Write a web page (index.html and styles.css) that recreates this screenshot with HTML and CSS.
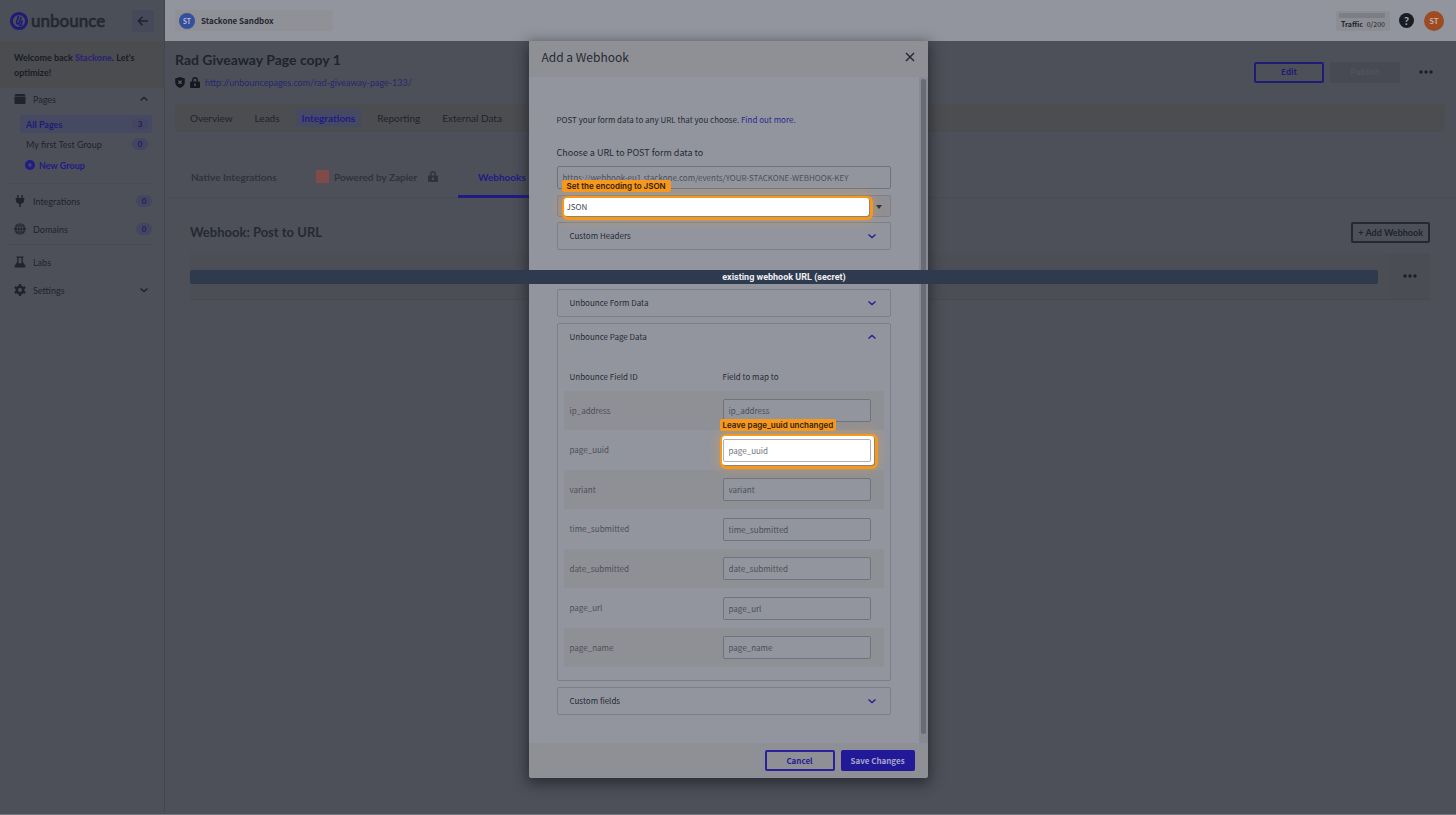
FILE: index.html
```html
<!DOCTYPE html>
<html lang="en">
<head>
<meta charset="utf-8">
<title>Rad Giveaway Page copy 1 - Integrations</title>
<link rel="stylesheet" href="styles.css">
</head>
<body>
<div class="app">
  <aside class="sidebar">
    <div class="brand">
      <svg class="brand-mark" viewBox="0 0 20 20"><circle cx="10" cy="10" r="7.6" fill="none" stroke="currentColor" stroke-width="3"/><path d="M9.400 5.600 7.800 10.600q-.5 2.400 1.200 2.200 1.200-.2 1.600-1.800L12 6.600M10.400 14.400l1.600-.4 1-4" fill="none" stroke="currentColor" stroke-width="1.700" stroke-linecap="round"/></svg>
      <span class="brand-name">unbounce</span>
      <button class="collapse" aria-label="Collapse sidebar"><svg viewBox="0 0 12 12" class="i12"><path d="M11 6H1.500M5.500 1.800 1.300 6l4.200 4.200" fill="none" stroke="currentColor" stroke-width="1.500"/></svg></button>
    </div>
    <p class="welcome">Welcome back <b>Stackone</b>. Let's optimize!</p>
    <nav class="side-nav">
      <button class="nav-row"><svg class="i12" viewBox="0 0 12 12"><path fill="currentColor" d="M1.500 1h9l1 2H.5zM.5 3.600h11V10q0 1-1 1h-9q-1 0-1-1z"/></svg><span>Pages</span><svg class="chev" viewBox="0 0 10 10"><path d="m1.500 6.500 3.500-3 3.500 3" /></svg></button>
      <div class="sub">
        <a href="#" class="sub-row on"><span>All Pages</span><span class="pill">3</span></a>
        <a href="#" class="sub-row"><span>My first Test Group</span><span class="pill">0</span></a>
        <button class="new-group"><svg class="i10" viewBox="0 0 10 10"><circle cx="5" cy="5" r="5" fill="currentColor"/><path d="M5 2.700v4.600M2.700 5h4.600" stroke="#4d5059" stroke-width="1.200"/></svg>New Group</button>
      </div>
      <div class="nav-group">
        <a href="#" class="nav-row"><svg class="i12" viewBox="0 0 12 12"><path fill="currentColor" d="M3.200 0h1.400v3h2.800V0h1.400v3H10.500v1.300H10V6q0 2-3.200 2.800V12H5.200V8.800Q2 8 2 6V4.300h-.5V3h1.700z"/></svg><span>Integrations</span><span class="pill">0</span></a>
        <a href="#" class="nav-row"><svg class="i12" viewBox="0 0 12 12"><circle cx="6" cy="6" r="5.700" fill="currentColor"/><path d="M0 4.200h12M0 7.800h12M6 0v12M4.400.5q-2.300 5.500 0 11M7.600.5q2.300 5.500 0 11" fill="none" stroke="#4d5059" stroke-width=".7"/></svg><span>Domains</span><span class="pill">0</span></a>
      </div>
      <div class="nav-group">
        <a href="#" class="nav-row"><svg class="i12" viewBox="0 0 12 12"><path fill="currentColor" d="M2.500.5h7v1.300h-.8v4L11.500 10q.5 1.600-1 1.600h-9Q0 11.600.5 10l2.800-4.200v-4h-.8zm2.100 1.300v4.400L4 7.200h4l-.6-1V1.800z"/></svg><span>Labs</span></a>
        <button class="nav-row"><svg class="i12" viewBox="0 0 12 12"><circle cx="6" cy="6" r="3.200" fill="none" stroke="currentColor" stroke-width="2.600"/><path d="M6 0v2M6 10v2M.8 3l1.700 1M9.500 8l1.700 1M.8 9l1.700-1M9.500 4l1.700-1" stroke="currentColor" stroke-width="2.400"/></svg><span>Settings</span><svg class="chev" viewBox="0 0 10 10"><path d="m1.500 3.500 3.500 3 3.500-3"/></svg></button>
      </div>
    </nav>
  </aside>

  <div class="main">
    <header class="topbar">
      <button class="account"><span class="avatar blue">ST</span>Stackone Sandbox</button>
      <div class="usage"><div class="meter"></div><div class="usage-text"><b>Traffic</b><span>0/200</span></div></div>
      <button class="help" aria-label="Help">?</button>
      <button class="avatar orange">ST</button>
    </header>

    <main class="content">
      <div class="page-head">
        <div>
          <h1>Rad Giveaway Page copy 1</h1>
          <div class="url-row">
            <svg class="i10" viewBox="0 0 10 11"><path fill="currentColor" d="M5 0 9.800 1.500V5.500Q9.500 9 5 11 .5 9 .2 5.500V1.500z"/><path d="m3.400 3.600 3.200 3.200m0-3.200L3.400 6.800" stroke="#5b5e66" stroke-width="1.300"/></svg>
            <svg class="i10 lock" viewBox="0 0 10 11"><path fill="none" stroke="currentColor" stroke-width="1.400" d="M2.800 5V3a2.200 2.200 0 0 1 4.400 0v2"/><rect y="4.600" width="10" height="6.400" rx="1" fill="currentColor"/><path d="M5 6.500v2.500" stroke="#5b5e66" stroke-width="1.300"/></svg>
            <a href="#">http://unbouncepages.com/rad-giveaway-page-133/</a>
          </div>
        </div>
        <div class="head-actions">
          <button class="btn edit">Edit</button>
          <button class="btn publish" disabled>Publish</button>
          <button class="dots" aria-label="More actions"><svg viewBox="0 0 14 4"><circle cx="2" cy="2" r="1.700"/><circle cx="7" cy="2" r="1.700"/><circle cx="12" cy="2" r="1.700"/></svg></button>
        </div>
      </div>
      <nav class="tabs">
        <a href="#">Overview</a><a href="#">Leads</a><a href="#" class="on">Integrations</a><a href="#">Reporting</a><a href="#">External Data</a>
      </nav>
    </main>
    <nav class="subtabs">
      <a href="#" class="native">Native Integrations</a>
      <a href="#" class="zapier"><span class="zap"></span>Powered by Zapier<svg class="i10 lock" viewBox="0 0 10 11"><path fill="none" stroke="currentColor" stroke-width="1.400" d="M2.800 5V3a2.200 2.200 0 0 1 4.400 0v2"/><rect y="4.600" width="10" height="6.400" rx="1" fill="currentColor"/><path d="M5 6.500v2.500" stroke="#5b5e66" stroke-width="1.300"/></svg></a>
      <a href="#" class="hooks">Webhooks</a>
    </nav>
    <section class="hook-section">
      <div class="hook-head"><h2>Webhook: Post to URL</h2><button class="add">+ Add Webhook</button></div>
      <div class="hook-card">
        <div class="hook-url"><div class="secret">existing webhook URL (secret)</div></div>
        <button class="dots" aria-label="Webhook actions"><svg viewBox="0 0 14 4"><circle cx="2" cy="2" r="1.700"/><circle cx="7" cy="2" r="1.700"/><circle cx="12" cy="2" r="1.700"/></svg></button>
      </div>
    </section>
  </div>
</div>

<div class="overlay">
  <div class="modal" role="dialog" aria-labelledby="modal-title">
    <div class="modal-head"><h2 id="modal-title">Add a Webhook</h2><button aria-label="Close"><svg viewBox="0 0 10 10"><path d="m1 1 8 8m0-8L1 9" stroke="currentColor" stroke-width="1.500"/></svg></button></div>
    <div class="modal-body">
      <form class="form" id="hook-form">
        <p class="intro">POST your form data to any URL that you choose. <a href="#">Find out more.</a></p>
        <label class="url-label" for="hook-url">Choose a URL to POST form data to</label>
        <input id="hook-url" class="field" type="text" placeholder="https://webhook-eu1.stackone.com/events/YOUR-STACKONE-WEBHOOK-KEY">
        <div class="encoding">
          <div class="callout">Set the encoding to JSON</div>
          <select class="spot" aria-label="Encoding"><option>JSON</option></select>
          <svg class="caret" viewBox="0 0 6 4"><path d="M0 0h6L3 4z"/></svg>
        </div>
        <button type="button" class="panel row headers">Custom Headers<svg class="chev" viewBox="0 0 10 10"><path d="m1.500 3.500 3.500 3 3.500-3"/></svg></button>
        <button type="button" class="panel row">Unbounce Form Data<svg class="chev" viewBox="0 0 10 10"><path d="m1.500 3.500 3.500 3 3.500-3"/></svg></button>
        <div class="panel">
          <button type="button" class="row open">Unbounce Page Data<svg class="chev" viewBox="0 0 10 10"><path d="m1.500 6.500 3.500-3 3.500 3"/></svg></button>
          <table>
            <thead><tr><th>Unbounce Field ID</th><th>Field to map to</th></tr></thead>
            <tbody>
              <tr><td><label for="f1">ip_address</label></td><td><input id="f1" class="field" placeholder="ip_address"></td></tr>
              <tr><td><label for="f2">page_uuid</label></td><td><div class="uuid spot"><div class="callout">Leave page_uuid unchanged</div><input id="f2" class="field" placeholder="page_uuid"></div></td></tr>
              <tr><td><label for="f3">variant</label></td><td><input id="f3" class="field" placeholder="variant"></td></tr>
              <tr><td><label for="f4">time_submitted</label></td><td><input id="f4" class="field" placeholder="time_submitted"></td></tr>
              <tr><td><label for="f5">date_submitted</label></td><td><input id="f5" class="field" placeholder="date_submitted"></td></tr>
              <tr><td><label for="f6">page_url</label></td><td><input id="f6" class="field" placeholder="page_url"></td></tr>
              <tr><td><label for="f7">page_name</label></td><td><input id="f7" class="field" placeholder="page_name"></td></tr>
            </tbody>
          </table>
        </div>
        <button type="button" class="panel row">Custom fields<svg class="chev" viewBox="0 0 10 10"><path d="m1.500 3.500 3.500 3 3.500-3"/></svg></button>
      </form>
      <div class="scroll"><div class="thumb"></div></div>
    </div>
    <div class="modal-foot"><button class="btn cancel">Cancel</button><button class="btn save" form="hook-form">Save Changes</button></div>
  </div>
</div>
</body>
</html>
```
FILE: styles.css
```css
* { box-sizing: border-box; }
html, body { height: 100%; }
body { margin: 0; background: #4d5059; color: #20232c; font: 9px/15px Lato, "Noto Sans", sans-serif; overflow: hidden; }
button, input, select { font: inherit; color: inherit; margin: 0; }
button { border: 0; padding: 0; background: none; display: flex; align-items: center; text-align: left; }
a { color: inherit; text-decoration: none; }
svg { display: block; flex: none; }
h1, h2, p { margin: 0; }
.i12 { width: 12px; height: 12px; }
.i10 { width: 10px; height: 11px; }
.chev { width: 10px; height: 10px; margin-left: auto; fill: none; stroke: currentColor; stroke-width: 1.5; }

.app { display: flex; height: 100%; border-bottom: 1px solid #74777e; }
.sidebar { flex: none; width: 165px; border-right: 1px solid #444750; }
.brand { display: flex; align-items: center; height: 41px; padding: 0 10px 0 9px; background: #4b4f58; }
.brand-mark { width: 20px; height: 20px; color: #211b78; }
.brand-name { margin-left: 2px; font: 500 17px/20px Lato, sans-serif; color: #242730; -webkit-text-stroke: 0.5px currentColor; }
.collapse { justify-content: center; width: 22px; height: 22px; margin-left: auto; border-radius: 3px; background: #454959; }
.welcome { padding: 9px 20px 8px 14px; background: #4b4c50; color: #191c24; font-weight: 700; }
.welcome b { color: #2b2575; }
.nav-row { display: flex; align-items: center; gap: 7px; width: 100%; height: 28px; padding: 0 12px 0 14px; color: #20232c; }
.side-nav > .nav-row { height: 22px; }
.nav-row .chev { margin-right: 3px; }
.pill { margin-left: auto; width: 16px; height: 12px; border-radius: 6px; background: #444561; color: #211d5c; font: 700 8px/12px Lato, sans-serif; text-align: center; }
.sub { padding: 5px 12px 7px 20px; }
.sub-row { display: flex; align-items: center; height: 18px; margin-bottom: 2px; padding: 0 4px 0 6px; border-radius: 2px; }
.sub-row.on { background: #464962; color: #211b78; font-weight: 700; }
.new-group { gap: 4px; height: 20px; padding-left: 5px; color: #211b87; font-weight: 700; }
.new-group .i10 { height: 10px; }
.nav-group { margin-top: 1px; }
.nav-group::before { content: ""; display: block; height: 1px; margin: 0 12px 3px 9px; background: #484b54; }

.main { flex: 1; min-width: 0; }
.topbar { display: flex; align-items: center; height: 41px; padding: 0 12px 0 10px; background: #92959d; }
.account { gap: 6px; width: 158px; height: 21px; padding: 0 4px; border-radius: 2px; background: #8f9197; font: 700 8px/14px "Noto Sans CJK SC", sans-serif; color: #242730; }
.avatar { display: flex; align-items: center; justify-content: center; width: 16px; height: 16px; border-radius: 50%; font: 700 7px/8px Lato, sans-serif; color: #b9bed0; }
.blue { background: #354f9c; }
.orange { width: 20px; height: 20px; background: #9c4b22; color: #c8b5ad; font-size: 8px; }
.usage { margin-left: auto; width: 54px; height: 20px; padding: 2px 5px 0 3px; border-radius: 2px; background: #8c8e93; }
.meter { height: 5px; border-radius: 1px; background: #7b7e86; }
.usage-text { display: flex; justify-content: space-between; padding-left: 2px; font: 7px/13px "Noto Sans CJK SC", sans-serif; color: #22252d; }
.help { justify-content: center; width: 15px; height: 15px; margin: 0 10px 0 9px; border-radius: 50%; background: #191c24; color: #a5a8b0; font: 700 11px/15px Lato, sans-serif; }

.content { padding: 9px 11px 0 10px; }
.page-head { display: flex; justify-content: space-between; }
h1 { font: 700 14px/20px Lato, sans-serif; color: #20232c; }
.url-row { display: flex; align-items: center; gap: 5px; height: 15px; margin-top: 5px; color: #15181f; }
.url-row a { color: #29266e; }
.head-actions { display: flex; align-items: center; gap: 6px; height: 44px; padding-right: 12px; }
.btn { justify-content: center; width: 70px; height: 21px; border-radius: 2px; font: 700 8px/14px "Noto Sans CJK SC", sans-serif; }
.edit { border: 2px solid #211b78; color: #211b78; }
.publish { background: #474a52; color: #50535b; }
.dots { justify-content: center; width: 14px; height: 14px; margin-left: 13px; }
.dots svg { width: 14px; height: 4px; fill: #1c1f27; }
.tabs { display: flex; align-items: center; gap: 10px; height: 28px; margin-top: 10px; padding: 0 9px; background: #4c4d51; border-radius: 3px; font-size: 10px; }
.tabs a { padding: 0 6px; line-height: 18px; border-radius: 2px; }
.tabs .on { background: #464962; color: #211b87; font-weight: 700; }
.subtabs { display: flex; align-items: center; height: 42px; margin-top: 24px; border-bottom: 1px solid #494c55; color: #30333b; font-size: 10px; font-weight: 700; }
.subtabs a { height: 42px; line-height: 42px; }
.native { width: 151px; padding-left: 26px; }
.zapier { display: flex; align-items: center; width: 142px; }
.zap { width: 13px; height: 13px; margin-right: 5px; border-radius: 1px; background: #804a48; }
.zapier .lock { margin-left: auto; margin-right: 20px; }
.subtabs .hooks { width: 86px; padding-left: 20px; border-bottom: 3px solid #211b87; color: #211b87; }
.hook-section { padding: 22px 26px 0 25px; }
.hook-head { display: flex; align-items: center; justify-content: space-between; height: 24px; }
.hook-head h2 { font: 700 13px/20px Lato, sans-serif; color: #262932; }
.add { height: 21px; padding: 0 5px; border: 2px solid #252831; border-radius: 2px; font-weight: 700; }
.hook-card { display: flex; height: 47px; margin-top: 9px; border-bottom: 1px solid #484a52; background: #4c4e56; }
.hook-url { flex: 1; padding: 17px 12px 0 0; }
.secret { position: relative; z-index: 3; height: 14px; border-radius: 2px; background: #2e3a4d; color: #eef0f4; font: 700 9px/14px Roboto, sans-serif; text-align: center; }
.hook-card .dots { width: 40px; height: 46px; margin: 0; background: #4b4d55; }

.overlay { position: absolute; inset: 41px 0 0; display: flex; justify-content: center; align-items: flex-start; }
.modal { width: 399px; border-radius: 0 0 3px 3px; background: #92959e; box-shadow: 0 4px 14px 2px rgba(20, 21, 26, .6); font: 8px/14px "Noto Sans CJK SC", sans-serif; color: #262a33; }
.modal-head { display: flex; align-items: center; justify-content: space-between; height: 35px; padding: 0 13px 4px; background: #8f9095; }
.modal-head h2 { font: 400 12px/20px "Noto Sans CJK SC", sans-serif; }
.modal-head svg { width: 10px; height: 10px; }
.modal-body { display: flex; border-top: 1px solid #8d9099; }
.form { flex: 1; display: flex; flex-direction: column; padding: 36px 28px 22px; }
.intro a { color: #2d2591; }
.url-label { margin: 18px 0 5px; font-size: 9px; line-height: 16px; }
.field { display: block; width: 100%; height: 23px; padding: 0 5px; border: 1px solid #70737b; border-radius: 2px; background: #92959e; outline: 0; }
.field::placeholder { color: #4c4f57; opacity: 1; }
.encoding { position: relative; display: flex; align-items: center; margin-top: 6px; padding: 1px 8px 0 6px; height: 22px; border: 1px solid #7d8089; border-radius: 2px; background: #8f8f94; }
.spot { border: 0; border-radius: 3px; background: #fff; box-shadow: 1px 1px 0 0 #8a8478, 1px 1px 0 3px #f5981c, 0 0 12px 4px rgba(245, 160, 60, .4); }
select.spot { appearance: none; width: 305px; height: 18px; padding: 0 3px; color: #44474f; outline: 0; }
.caret { width: 6px; height: 4px; margin-left: auto; fill: #30333b; }
.callout { position: absolute; z-index: 1; left: 4px; bottom: 24px; padding: 0 5px; border-radius: 2px; background: #f5981c; color: #33200c; font: 600 8px/12px Inter, sans-serif; white-space: nowrap; }
.panel { width: 100%; margin-bottom: 6px; border: 1px solid #7c7f89; border-radius: 2px; }
.row { width: 100%; height: 28px; padding: 0 13px 0 12px; }
.open { height: 26px; }
.row .chev { color: #281f92; }
.headers { margin: 5px 0 39px; }
table { width: 320px; margin: 12px 6px 13px; border-collapse: collapse; table-layout: fixed; }
th, td { padding: 0 0 0 6px; text-align: left; font-weight: 400; }
th { height: 29px; }
th:first-child { width: 152px; }
th:nth-child(2), td:nth-child(2) { padding: 0 13px 0 7px; }
td { height: 39px; color: #4c4f57; }
tr:nth-child(even) td { height: 40px; }
tbody tr:nth-child(odd) { background: #8f9095; }
.uuid { position: relative; margin: 0 -3px 0 -1px; padding: 3px 3px 3px 1px; }
.uuid .callout { left: -2px; bottom: 34px; padding: 0 3px; }
.uuid .field { border-color: #b0b1b5; background: #fff; }
.uuid .field::placeholder { color: #70737a; }
.scroll { width: 9px; padding: 2px 2px 9px; background: #878a93; }
.thumb { height: 100%; border-radius: 3px; background: #696c75; }
.modal-foot { display: flex; align-items: center; justify-content: flex-end; gap: 6px; height: 35px; padding: 0 13px; background: #8f9095; border-radius: 0 0 3px 3px; }
.cancel { border: 2px solid #2a209c; color: #261d91; }
.save { width: 74px; background: #221998; color: #a7a5c8; }
```
